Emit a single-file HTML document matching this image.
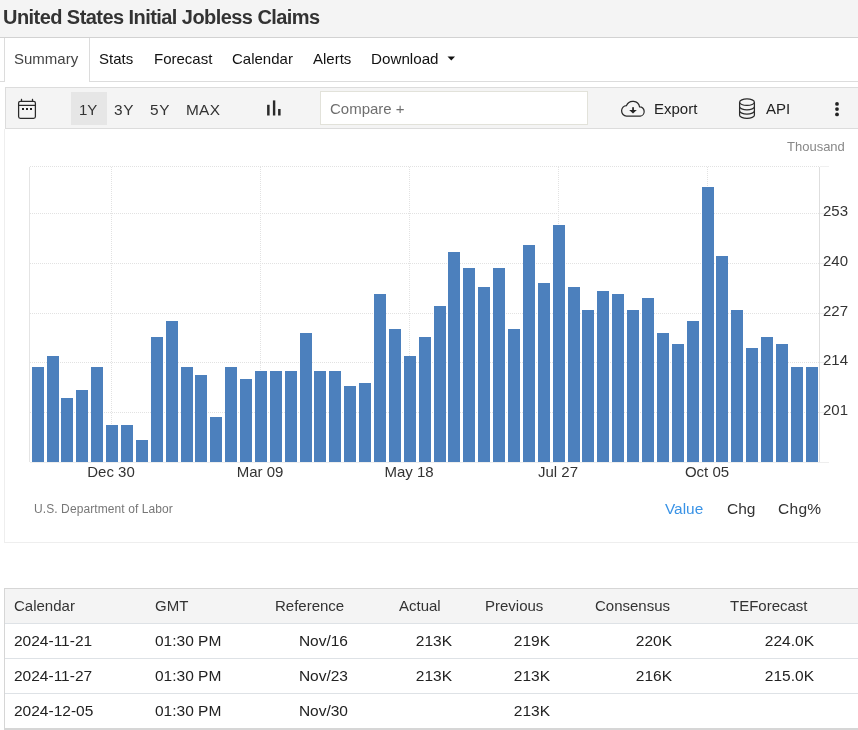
<!DOCTYPE html>
<html><head><meta charset="utf-8">
<style>
html,body{margin:0;padding:0;}
body{width:858px;height:730px;overflow:hidden;position:relative;background:#fff;font-family:"Liberation Sans",sans-serif;color:#222;}
.a{position:absolute;line-height:1;white-space:nowrap;will-change:transform;}
.r{text-align:right;}
.box{position:absolute;box-sizing:border-box;}
svg{position:absolute;left:0;top:0;}
.dot{stroke:#e2e2e2;stroke-width:1;stroke-dasharray:1 1;}
</style></head><body>
<div class="box" style="left:0;top:0;width:858px;height:38px;background:#f4f4f4;border-bottom:1px solid #d2d2d2;"></div>
<div class="a" style="left:3px;top:6.6px;font-size:20px;letter-spacing:-0.56px;font-weight:bold;color:#333;">United States Initial Jobless Claims</div>
<div class="box" style="left:0;top:81px;width:5px;height:1px;background:#dcdcdc;"></div>
<div class="box" style="left:89px;top:81px;width:769px;height:1px;background:#dcdcdc;"></div>
<div class="box" style="left:4px;top:38px;width:1px;height:44px;background:#dcdcdc;"></div>
<div class="box" style="left:89px;top:38px;width:1px;height:44px;background:#dcdcdc;"></div>
<div class="a" style="left:14px;top:51px;font-size:15px;color:#444;">Summary</div>
<div class="a" style="left:99px;top:51px;font-size:15px;color:#111;">Stats</div>
<div class="a" style="left:154px;top:51px;font-size:15px;color:#111;">Forecast</div>
<div class="a" style="left:232px;top:51px;font-size:15px;color:#111;">Calendar</div>
<div class="a" style="left:313px;top:51px;font-size:15px;color:#111;">Alerts</div>
<div class="a" style="left:371px;top:51px;font-size:15.2px;color:#111;">Download</div>
<div class="box" style="left:5px;top:87px;width:853px;height:42px;background:#f4f4f4;border:1px solid #dcdcdc;border-right:none;"></div>
<div class="box" style="left:71px;top:92px;width:36px;height:33px;background:#e6e6e6;"></div>
<div class="a" style="left:79.3px;top:102px;font-size:15px;color:#333;">1Y</div>
<div class="a" style="left:114px;top:102px;font-size:15.4px;letter-spacing:0.6px;color:#333;">3Y</div>
<div class="a" style="left:149.8px;top:102px;font-size:15.4px;letter-spacing:0.6px;color:#333;">5Y</div>
<div class="a" style="left:186px;top:102px;font-size:15.4px;letter-spacing:0.3px;color:#333;">MAX</div>
<div class="box" style="left:320px;top:91px;width:268px;height:34px;background:#fff;border:1px solid #e2e2da;"></div>
<div class="a" style="left:330px;top:101px;font-size:15px;color:#6f6f6f;">Compare +</div>
<div class="a" style="left:654px;top:101px;font-size:15px;color:#222;">Export</div>
<div class="a" style="left:766px;top:101px;font-size:15px;color:#222;">API</div>
<div class="box" style="left:4px;top:129px;width:854px;height:414px;background:#fff;border:1px solid #eeeeee;border-top:none;border-right:none;"></div>
<svg width="858" height="730">
<path d="M447.5 56.5 L455 56.5 L451.25 60.5 Z" fill="#111"/>
<g fill="none" stroke="#2a2a2a" stroke-width="1.25">
<rect x="18.6" y="101.3" width="16.8" height="17" rx="1.8"/>
<line x1="18.6" y1="105.4" x2="35.4" y2="105.4"/>
<line x1="21.5" y1="98.8" x2="21.5" y2="101.3"/>
<line x1="32.5" y1="98.8" x2="32.5" y2="101.3"/>
</g>
<g fill="#222"><rect x="22" y="108" width="2" height="2"/><rect x="26" y="108" width="2" height="2"/><rect x="30" y="108" width="2" height="2"/></g>
<g fill="#2a2a2a"><rect x="267.1" y="104.8" width="2.5" height="10.7"/><rect x="272.9" y="100.4" width="2.4" height="15.1"/><rect x="278.1" y="109" width="2.5" height="6.5"/></g>
<path d="M626.5 116.1 H640.3 A4.2 4.6 0 0 0 639.6 106.9 A6.9 6.9 0 0 0 626.5 105.5 A4.9 5.3 0 0 0 626.5 116.1 Z" fill="none" stroke="#2a2a2a" stroke-width="1.25"/>
<rect x="632.2" y="107.2" width="1.7" height="4" fill="#222"/>
<path d="M629.2 110 L636.8 110 L633 113.6 Z" fill="#222"/>
<g fill="none" stroke="#2a2a2a" stroke-width="1.25">
<ellipse cx="747" cy="102.2" rx="7.4" ry="3.3"/>
<path d="M739.6 102.2 V115.2 A7.4 3.1 0 0 0 754.4 115.2 V102.2"/>
<path d="M739.6 106.7 A7.4 3.1 0 0 0 754.4 106.7"/>
<path d="M739.6 111.0 A7.4 3.1 0 0 0 754.4 111.0"/>
</g>
<g fill="#222"><circle cx="837" cy="103.9" r="1.9"/><circle cx="837" cy="109.1" r="1.9"/><circle cx="837" cy="114.4" r="1.9"/></g>
<line x1="30" y1="166.5" x2="819" y2="166.5" class="dot"/><line x1="820" y1="166.5" x2="829" y2="166.5" stroke="#f0f0f0"/><line x1="30" y1="213.5" x2="819" y2="213.5" class="dot"/><line x1="820" y1="213.5" x2="829" y2="213.5" stroke="#f0f0f0"/><line x1="30" y1="263.5" x2="819" y2="263.5" class="dot"/><line x1="820" y1="263.5" x2="829" y2="263.5" stroke="#f0f0f0"/><line x1="30" y1="313.5" x2="819" y2="313.5" class="dot"/><line x1="820" y1="313.5" x2="829" y2="313.5" stroke="#f0f0f0"/><line x1="30" y1="362.5" x2="819" y2="362.5" class="dot"/><line x1="820" y1="362.5" x2="829" y2="362.5" stroke="#f0f0f0"/><line x1="30" y1="412.5" x2="819" y2="412.5" class="dot"/><line x1="820" y1="412.5" x2="829" y2="412.5" stroke="#f0f0f0"/>
<line x1="111.5" y1="167" x2="111.5" y2="462" class="dot"/><line x1="260.5" y1="167" x2="260.5" y2="462" class="dot"/><line x1="409.5" y1="167" x2="409.5" y2="462" class="dot"/><line x1="558.5" y1="167" x2="558.5" y2="462" class="dot"/><line x1="707.5" y1="167" x2="707.5" y2="462" class="dot"/>
<line x1="29.5" y1="167" x2="29.5" y2="462" stroke="#e4e4e4"/>
<line x1="819.5" y1="167" x2="819.5" y2="463" stroke="#dedede"/>
<line x1="30" y1="462.5" x2="829" y2="462.5" stroke="#eeeeee"/>
<g fill="#4c80bd"><rect x="32" y="367" width="12" height="95"/><rect x="47" y="356" width="12" height="106"/><rect x="61" y="398" width="12" height="64"/><rect x="76" y="390" width="12" height="72"/><rect x="91" y="367" width="12" height="95"/><rect x="106" y="425" width="12" height="37"/><rect x="121" y="425" width="12" height="37"/><rect x="136" y="440" width="12" height="22"/><rect x="151" y="337" width="12" height="125"/><rect x="166" y="321" width="12" height="141"/><rect x="181" y="367" width="12" height="95"/><rect x="195" y="375" width="12" height="87"/><rect x="210" y="417" width="12" height="45"/><rect x="225" y="367" width="12" height="95"/><rect x="240" y="379" width="12" height="83"/><rect x="255" y="371" width="12" height="91"/><rect x="270" y="371" width="12" height="91"/><rect x="285" y="371" width="12" height="91"/><rect x="300" y="333" width="12" height="129"/><rect x="314" y="371" width="12" height="91"/><rect x="329" y="371" width="12" height="91"/><rect x="344" y="386" width="12" height="76"/><rect x="359" y="383" width="12" height="79"/><rect x="374" y="294" width="12" height="168"/><rect x="389" y="329" width="12" height="133"/><rect x="404" y="356" width="12" height="106"/><rect x="419" y="337" width="12" height="125"/><rect x="434" y="306" width="12" height="156"/><rect x="448" y="252" width="12" height="210"/><rect x="463" y="268" width="12" height="194"/><rect x="478" y="287" width="12" height="175"/><rect x="493" y="268" width="12" height="194"/><rect x="508" y="329" width="12" height="133"/><rect x="523" y="245" width="12" height="217"/><rect x="538" y="283" width="12" height="179"/><rect x="553" y="225" width="12" height="237"/><rect x="568" y="287" width="12" height="175"/><rect x="582" y="310" width="12" height="152"/><rect x="597" y="291" width="12" height="171"/><rect x="612" y="294" width="12" height="168"/><rect x="627" y="310" width="12" height="152"/><rect x="642" y="298" width="12" height="164"/><rect x="657" y="333" width="12" height="129"/><rect x="672" y="344" width="12" height="118"/><rect x="687" y="321" width="12" height="141"/><rect x="702" y="187" width="12" height="275"/><rect x="716" y="256" width="12" height="206"/><rect x="731" y="310" width="12" height="152"/><rect x="746" y="348" width="12" height="114"/><rect x="761" y="337" width="12" height="125"/><rect x="776" y="344" width="12" height="118"/><rect x="791" y="367" width="12" height="95"/><rect x="806" y="367" width="12" height="95"/></g>
</svg>
<div class="a" style="left:787px;top:140px;font-size:13px;color:#888;">Thousand</div>
<div class="a" style="left:823px;top:203px;font-size:15px;color:#333;">253</div>
<div class="a" style="left:823px;top:253px;font-size:15px;color:#333;">240</div>
<div class="a" style="left:823px;top:303px;font-size:15px;color:#333;">227</div>
<div class="a" style="left:823px;top:352px;font-size:15px;color:#333;">214</div>
<div class="a" style="left:823px;top:402px;font-size:15px;color:#333;">201</div>
<div class="a" style="left:70.5px;top:464px;font-size:15px;color:#333;width:80px;text-align:center;">Dec 30</div>
<div class="a" style="left:219.5px;top:464px;font-size:15px;color:#333;width:80px;text-align:center;">Mar 09</div>
<div class="a" style="left:368.5px;top:464px;font-size:15px;color:#333;width:80px;text-align:center;">May 18</div>
<div class="a" style="left:517.5px;top:464px;font-size:15px;color:#333;width:80px;text-align:center;">Jul 27</div>
<div class="a" style="left:666.5px;top:464px;font-size:15px;color:#333;width:80px;text-align:center;">Oct 05</div>
<div class="a" style="left:34px;top:503px;font-size:12px;letter-spacing:0.09px;color:#777;">U.S. Department of Labor</div>
<div class="a" style="left:665px;top:501px;font-size:15.4px;color:#3a93e6;">Value</div>
<div class="a" style="left:727px;top:501px;font-size:15.5px;color:#333;">Chg</div>
<div class="a" style="left:778px;top:501px;font-size:15.5px;letter-spacing:0.3px;color:#333;">Chg%</div>
<div class="box" style="left:4px;top:588px;width:854px;height:142px;background:#fff;border-left:1px solid #d6d6d6;border-top:1px solid #d6d6d6;"></div>
<div class="box" style="left:5px;top:589px;width:853px;height:34px;background:#f4f4f4;"></div>
<div class="box" style="left:5px;top:623px;width:853px;height:1px;background:#dee2e6;"></div>
<div class="box" style="left:5px;top:658px;width:853px;height:1px;background:#dee2e6;"></div>
<div class="box" style="left:5px;top:693px;width:853px;height:1px;background:#dee2e6;"></div>
<div class="box" style="left:4px;top:728px;width:854px;height:2px;background:#d6d6d6;"></div>
<div class="a" style="left:14px;top:598px;font-size:15px;color:#333;">Calendar</div>
<div class="a" style="left:155px;top:598px;font-size:15px;color:#333;">GMT</div>
<div class="a" style="left:275px;top:598px;font-size:15px;color:#333;">Reference</div>
<div class="a" style="left:399px;top:598px;font-size:15px;color:#333;">Actual</div>
<div class="a" style="left:485px;top:598px;font-size:15px;color:#333;">Previous</div>
<div class="a" style="left:595px;top:598px;font-size:15px;color:#333;">Consensus</div>
<div class="a" style="left:730px;top:598px;font-size:15px;color:#333;">TEForecast</div>
<div class="a" style="left:14.3px;top:632.5px;font-size:15.5px;color:#222;">2024-11-21</div>
<div class="a" style="left:155px;top:632.5px;font-size:15.5px;color:#222;">01:30 PM</div>
<div class="a r" style="left:248px;width:100px;top:632.5px;font-size:15.5px;color:#222;">Nov/16</div>
<div class="a r" style="left:352px;width:100px;top:632.5px;font-size:15.5px;color:#222;">213K</div>
<div class="a r" style="left:450px;width:100px;top:632.5px;font-size:15.5px;color:#222;">219K</div>
<div class="a r" style="left:572px;width:100px;top:632.5px;font-size:15.5px;color:#222;">220K</div>
<div class="a r" style="left:714px;width:100px;top:632.5px;font-size:15.5px;color:#222;">224.0K</div>
<div class="a" style="left:14.3px;top:667.5px;font-size:15.5px;color:#222;">2024-11-27</div>
<div class="a" style="left:155px;top:667.5px;font-size:15.5px;color:#222;">01:30 PM</div>
<div class="a r" style="left:248px;width:100px;top:667.5px;font-size:15.5px;color:#222;">Nov/23</div>
<div class="a r" style="left:352px;width:100px;top:667.5px;font-size:15.5px;color:#222;">213K</div>
<div class="a r" style="left:450px;width:100px;top:667.5px;font-size:15.5px;color:#222;">213K</div>
<div class="a r" style="left:572px;width:100px;top:667.5px;font-size:15.5px;color:#222;">216K</div>
<div class="a r" style="left:714px;width:100px;top:667.5px;font-size:15.5px;color:#222;">215.0K</div>
<div class="a" style="left:14.3px;top:702.5px;font-size:15.5px;color:#222;">2024-12-05</div>
<div class="a" style="left:155px;top:702.5px;font-size:15.5px;color:#222;">01:30 PM</div>
<div class="a r" style="left:248px;width:100px;top:702.5px;font-size:15.5px;color:#222;">Nov/30</div>
<div class="a r" style="left:450px;width:100px;top:702.5px;font-size:15.5px;color:#222;">213K</div>
</body></html>
